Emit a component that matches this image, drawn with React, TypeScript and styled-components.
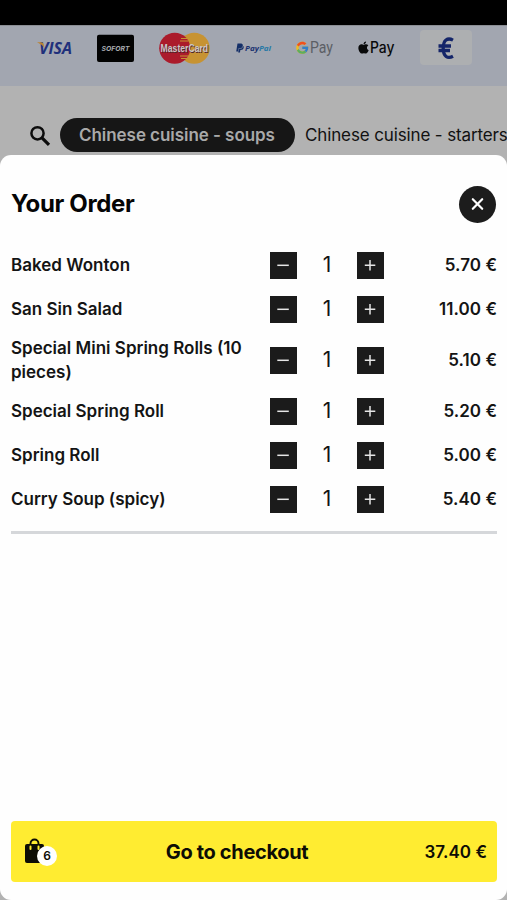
import React from "react";
import styled, { createGlobalStyle } from "styled-components";
import { FcGoogle } from "react-icons/fc";
import { FaApple, FaPaypal } from "react-icons/fa";

const GlobalStyle = createGlobalStyle`
  * { box-sizing: border-box; }
  body { margin: 0; background: #b2b2b2; font-family: Inter, "Liberation Sans", sans-serif; color: #141414; }
  button { font: inherit; border: 0; padding: 0; }
`;

const Screen = styled.div`
  width: 507px;
  height: 900px;
  display: flex;
  flex-direction: column;
  overflow: hidden;
  background: #b2b2b2;
`;

const StatusBar = styled.div`
  height: 25px;
  flex: none;
  background: #000;
`;

const Payments = styled.div`
  height: 61px;
  flex: none;
  display: flex;
  align-items: flex-start;
  gap: 25px;
  padding: 4px 0 0 37px;
  background: #a2a6b0;
  border-top: 1px solid #8b8e94;

  svg { display: block; flex: none; overflow: visible; }
`;

const PayLogo = styled.div<{ $width: number; $color: string }>`
  width: ${(p) => p.$width}px;
  height: 35px;
  flex: none;
  display: flex;
  align-items: center;
  justify-content: space-between;
  color: ${(p) => p.$color};
`;

const EuroTile = styled.div`
  width: 52px;
  height: 35px;
  flex: none;
  display: flex;
  align-items: center;
  justify-content: center;
  border-radius: 4px;
  background: #adafb1;
`;

const Categories = styled.nav`
  height: 69px;
  flex: none;
  display: flex;
  align-items: flex-start;
  padding: 32px 0 0 29px;
  overflow: hidden;
  white-space: nowrap;
`;

const SearchIcon = styled.svg`
  width: 22px;
  height: 22px;
  margin: 7px 9px 0 0;
  flex: none;
`;

const Category = styled.span<{ $active?: boolean }>`
  height: 34px;
  flex: none;
  line-height: 35px;
  border-radius: 17px;
  font-size: 17px;
  font-weight: ${(p) => (p.$active ? 600 : 400)};
  letter-spacing: ${(p) => (p.$active ? "-0.05px" : "-0.13px")};
  width: ${(p) => (p.$active ? "235px" : "auto")};
  padding-left: ${(p) => (p.$active ? "19px" : "10px")};
  color: ${(p) => (p.$active ? "#a9a9a9" : "#111")};
  background: ${(p) => (p.$active ? "#161616" : "transparent")};
`;

const Sheet = styled.section`
  flex: 1;
  display: flex;
  flex-direction: column;
  padding: 0 10px 18px 11px;
  border-radius: 11px;
  background: #fefefe;
`;

const SheetHeader = styled.header`
  height: 88px;
  display: flex;
  align-items: center;
  justify-content: space-between;
  padding: 10px 1px 0 0;
`;

const Title = styled.h1`
  margin: -1px 0 0;
  font-size: 24px;
  font-weight: 700;
  letter-spacing: -0.34px;
  color: #050505;
`;

const CloseButton = styled.button`
  width: 37px;
  height: 37px;
  display: grid;
  place-items: center;
  border-radius: 50%;
  background: #1c1c1c;
`;

const Items = styled.ul`
  margin: 0;
  padding: 0 0 10px;
  list-style: none;
  border-bottom: 3px solid #d5d7da;
`;

const Item = styled.li`
  min-height: 44px;
  display: grid;
  grid-template-columns: 259px 114px 1fr;
  align-items: center;
  padding: 5px 0;
`;

const Name = styled.span`
  padding-right: 20px;
  font-size: 17px;
  line-height: 24px;
  font-weight: 600;
`;

const Stepper = styled.div`
  display: flex;
  align-items: center;
  justify-content: space-between;
`;

const StepButton = styled.button`
  width: 27px;
  height: 27px;
  display: grid;
  place-items: center;
  background: #1b1b1b;
`;

const Quantity = styled.span`
  font-size: 21px;
  line-height: 26px;
`;

const Price = styled.span`
  text-align: right;
  font-size: 17px;
  font-weight: 600;
  letter-spacing: 0.05px;
  white-space: nowrap;
`;

const Checkout = styled.button`
  height: 61px;
  margin-top: auto;
  display: grid;
  grid-template-columns: 63px 1fr 100px;
  align-items: center;
  padding: 0 10px 0 13px;
  border-radius: 4px;
  background: #ffec31;
  color: #0d0d05;
`;

const Bag = styled.span`
  position: relative;
  width: 34px;
  height: 28px;
  text-align: left;
`;

const BagCount = styled.span`
  position: absolute;
  left: 13px;
  top: 8px;
  width: 20px;
  height: 20px;
  border-radius: 50%;
  background: #fff;
  font-size: 12px;
  line-height: 20px;
  font-weight: 600;
  text-align: center;
`;

const CheckoutLabel = styled.span`
  font-size: 20px;
  font-weight: 700;
  letter-spacing: -0.34px;
  text-align: center;
`;

const order = [
  { name: "Baked Wonton", price: "5.70 €" },
  { name: "San Sin Salad", price: "11.00 €" },
  { name: "Special Mini Spring Rolls (10 pieces)", price: "5.10 €" },
  { name: "Special Spring Roll", price: "5.20 €" },
  { name: "Spring Roll", price: "5.00 €" },
  { name: "Curry Soup (spicy)", price: "5.40 €" },
];

function StepIcon({ plus }: { plus?: boolean }) {
  return (
    <svg width="13" height="13" viewBox="0 0 13 13" stroke="#e6e6e6" strokeWidth="1.5">
      <path d={plus ? "M.8 6.300h10.500M6 1.100v10.400" : "M.3 6.300h11.500"} />
    </svg>
  );
}

function PaymentLogos() {
  return (
    <Payments>
      <svg width="35" height="35" viewBox="0 0 35 35">
        <text x="2" y="23.800" textLength="33" lengthAdjust="spacingAndGlyphs" fontFamily="Open Sans" fontSize="15.500" fontWeight="700" fontStyle="italic" fill="#20307b">VISA</text>
        <path d="M0 12.300h4.300q2 0 2.300 1.800l.8 4Q4.500 14 0 12.300Z" fill="#b98333" />
      </svg>
      <svg width="37" height="35" viewBox="0 0 37 35">
        <rect y="4.700" width="37" height="27.300" rx="2" fill="#020202" />
        <text x="4.500" y="20.600" textLength="28" lengthAdjust="spacingAndGlyphs" fontFamily="Inter" fontSize="6.800" fontWeight="700" fontStyle="italic" fill="#a9abb0">SOFORT</text>
      </svg>
      <svg width="51" height="35" viewBox="0 0 51 35">
        <circle cx="35.200" cy="18.300" r="15.500" fill="#c79332" />
        <circle cx="15.700" cy="18.300" r="15.500" fill="#ab1b2b" />
        <path d="M22 8.500h6.500M21 11h8.500M21 26h8.500M22 28.500h6.500" stroke="#c79332" strokeWidth="1" />
        <text x="2.300" y="22.600" textLength="47.500" lengthAdjust="spacingAndGlyphs" fontFamily="Liberation Sans" fontSize="11.500" fontWeight="700" fill="#50242a">MasterCard</text>
        <text x="1.600" y="22" textLength="47.500" lengthAdjust="spacingAndGlyphs" fontFamily="Liberation Sans" fontSize="11.500" fontWeight="700" fill="#c9c7c9">MasterCard</text>
      </svg>
      <PayLogo $width={36} $color="#142f68">
        <FaPaypal size={10} />
        <svg width="26" height="12" viewBox="0 0 26 12">
          <text x="0" y="9.300" textLength="26" lengthAdjust="spacingAndGlyphs" fontFamily="Open Sans" fontSize="7.500" fontWeight="700" fontStyle="italic" fill="#1b3270">
            Pay<tspan fill="#2879a6">Pal</tspan>
          </text>
        </svg>
      </PayLogo>
      <svg width="37" height="35" viewBox="0 0 37 35">
        <FcGoogle x="-1" y="10.500" size={14.5} opacity=".82" />
        <text x="14" y="22.700" textLength="23" lengthAdjust="spacingAndGlyphs" fontFamily="Roboto" fontSize="16" fill="#5c5f65">Pay</text>
      </svg>
      <svg width="37" height="35" viewBox="0 0 37 35">
        <FaApple x="-1.500" y="10.500" size={14} color="#08090a" />
        <text x="12" y="22.800" textLength="24.500" lengthAdjust="spacingAndGlyphs" fontFamily="Inter" fontSize="15.500" fontWeight="500" fill="#08090a">Pay</text>
      </svg>
      <EuroTile>
        <svg width="16" height="24" viewBox="0 0 16 24">
          <path d="M15 4.100C9.500 1.300 5.200 4 5.200 12.300s4.500 10.800 9.800 8M.5 10h12.500M.5 14.500h11.500" fill="none" stroke="#142569" strokeWidth="3.300" />
        </svg>
      </EuroTile>
    </Payments>
  );
}

export default function App() {
  return (
    <>
      <GlobalStyle />
      <Screen>
        <StatusBar />
        <PaymentLogos />
        <Categories>
          <SearchIcon viewBox="0 0 22 22" fill="none" stroke="#0c0c0c">
            <circle cx="8.500" cy="8.300" r="6.100" strokeWidth="2.500" />
            <path d="M13 12.800l7 7" strokeWidth="3.200" />
          </SearchIcon>
          <Category $active>Chinese cuisine - soups</Category>
          <Category>Chinese cuisine - starters</Category>
        </Categories>
        <Sheet>
          <SheetHeader>
            <Title>Your Order</Title>
            <CloseButton aria-label="Close">
              <svg width="14" height="14" viewBox="0 0 14 14" stroke="#fff" strokeWidth="2.200" strokeLinecap="round">
                <path d="M1.800 2.200l9.400 9.600M11.200 2.200L1.800 11.800" />
              </svg>
            </CloseButton>
          </SheetHeader>
          <Items>
            {order.map((item) => (
              <Item key={item.name}>
                <Name>{item.name}</Name>
                <Stepper>
                  <StepButton aria-label="Remove one"><StepIcon /></StepButton>
                  <Quantity>1</Quantity>
                  <StepButton aria-label="Add one"><StepIcon plus /></StepButton>
                </Stepper>
                <Price>{item.price}</Price>
              </Item>
            ))}
          </Items>
          <Checkout>
            <Bag>
              <svg width="22" height="28" viewBox="0 0 22 28">
                <path d="M3 6h15q2 0 2 2v15q0 2-2 2H3q-2 0-2-2V8q0-2 2-2Z" fill="#0d0d05" />
                <path d="M6.500 7V5.500a4 4 0 0 1 8 0V7" fill="none" stroke="#0d0d05" strokeWidth="1.900" />
                <path d="M6.500 8.500v2.500M14.500 8.500v2.500" stroke="#ffec31" strokeWidth="2" strokeLinecap="round" />
              </svg>
              <BagCount>6</BagCount>
            </Bag>
            <CheckoutLabel>Go to checkout</CheckoutLabel>
            <Price>37.40 €</Price>
          </Checkout>
        </Sheet>
      </Screen>
    </>
  );
}
